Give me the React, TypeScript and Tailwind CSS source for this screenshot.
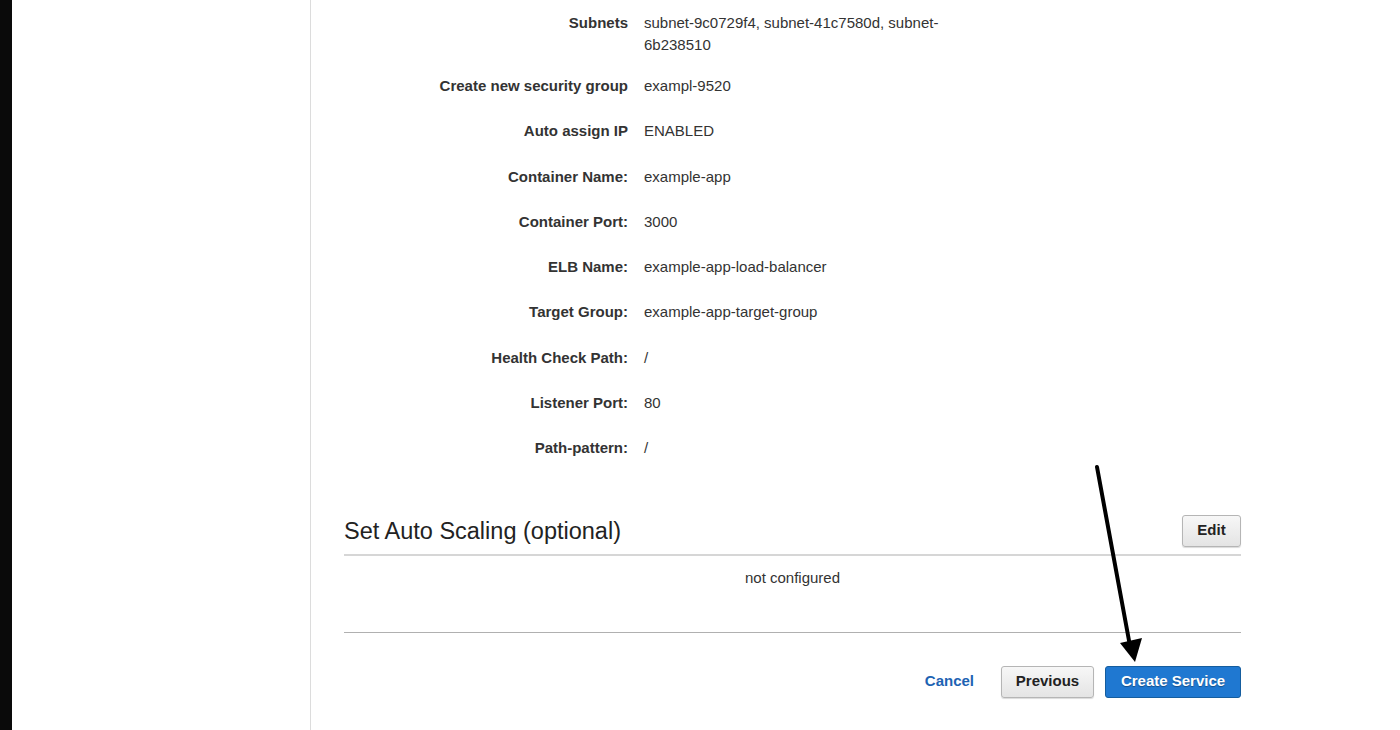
const rows: { label: string; value: string }[] = [
  { label: 'Subnets', value: 'subnet-9c0729f4, subnet-41c7580d, subnet-6b238510' },
  { label: 'Create new security group', value: 'exampl-9520' },
  { label: 'Auto assign IP', value: 'ENABLED' },
  { label: 'Container Name:', value: 'example-app' },
  { label: 'Container Port:', value: '3000' },
  { label: 'ELB Name:', value: 'example-app-load-balancer' },
  { label: 'Target Group:', value: 'example-app-target-group' },
  { label: 'Health Check Path:', value: '/' },
  { label: 'Listener Port:', value: '80' },
  { label: 'Path-pattern:', value: '/' },
];

export default function App() {
  return (
    <div className="relative flex h-[730px] w-[1400px] overflow-hidden bg-white font-['Liberation_Sans',Arial,sans-serif] text-[#333]">
      {/* dark edge of the window */}
      <div className="w-[12px] shrink-0 bg-[#0a0a0a]" />

      {/* side nav (empty) */}
      <div className="w-[299px] shrink-0 border-r border-[#dcdcdc]" />

      {/* main review panel */}
      <div className="ml-[33px] w-[897px] shrink-0 pt-[12px]">
        <div className="flex flex-col">
          {rows.map((r, i) => (
            <div key={r.label} className={`flex text-[15px] leading-[22px] ${i === 0 ? 'mb-[19px]' : 'mb-[23.3px]'}`}>
              <div className="w-[284px] shrink-0 text-right font-bold">{r.label}</div>
              <div className="ml-[16px] w-[305px]">{r.value}</div>
            </div>
          ))}
        </div>

        {/* Auto scaling section */}
        <div className="mt-[32px] flex items-center justify-between border-b-2 border-[#d6d6d6] pb-[7px]">
          <h2 className="text-[23.5px] leading-[30px] text-[#222]">Set Auto Scaling (optional)</h2>
          <button className="h-[32px] w-[59px] rounded-[3px] border border-[#b5b5b5] bg-gradient-to-b from-[#f7f7f7] to-[#e4e4e4] text-[15px] font-bold text-[#222] shadow-[0_1px_1px_rgba(0,0,0,0.15)]">
            Edit
          </button>
        </div>
        <div className="h-[77px] border-b border-[#b0b0b0] pt-[12px] text-center text-[15px] leading-[20px]">
          not configured
        </div>

        {/* footer actions */}
        <div className="mt-[33px] flex items-center justify-end">
          <a className="mr-[27px] text-[15px] font-bold text-[#1d63b3]">Cancel</a>
          <button className="mr-[11px] h-[32px] w-[93px] rounded-[3px] border border-[#b5b5b5] bg-gradient-to-b from-[#f7f7f7] to-[#e4e4e4] text-[15px] font-bold text-[#222] shadow-[0_1px_1px_rgba(0,0,0,0.15)]">
            Previous
          </button>
          <button className="h-[32px] w-[136px] rounded-[3px] border border-[#155d9e] bg-[#1f78d1] text-[15px] font-bold text-white [text-shadow:0_1px_1px_rgba(0,0,0,0.35)]">
            Create Service
          </button>
        </div>
      </div>

      {/* annotation arrow drawn over the page */}
      <svg className="pointer-events-none absolute left-0 top-0" width="1400" height="730" viewBox="0 0 1400 730">
        <line x1="1097" y1="467" x2="1130" y2="646" stroke="#000" strokeWidth="4" strokeLinecap="round" />
        <polygon points="1120,643 1142,638 1135,662" fill="#000" />
      </svg>
    </div>
  );
}
